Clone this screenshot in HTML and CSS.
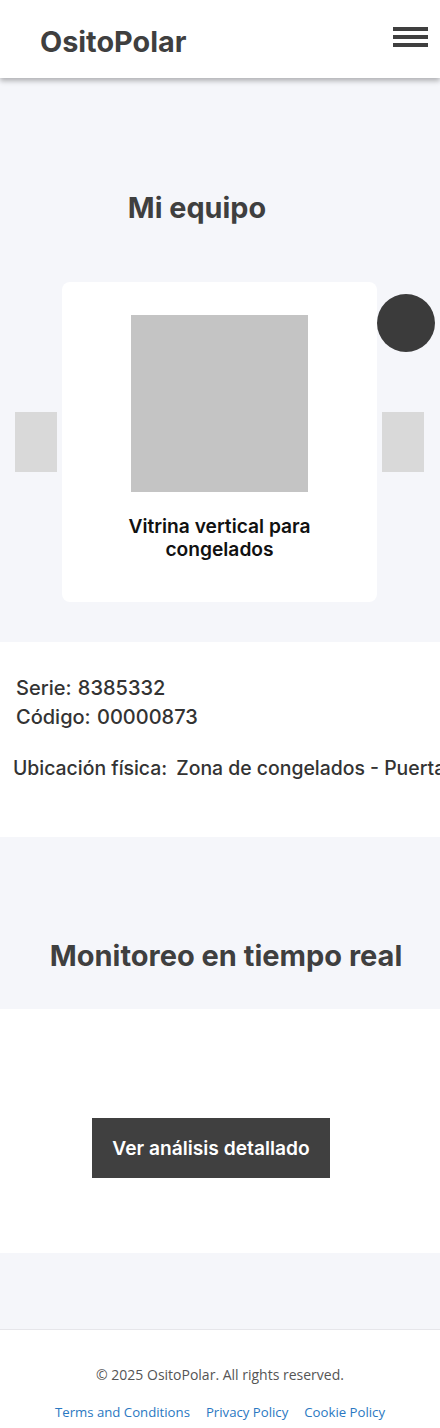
FILE: index.html
```html
<!DOCTYPE html>
<html lang="es">
<head>
<meta charset="utf-8">
<title>OsitoPolar</title>
<link rel="stylesheet" href="styles.css">
</head>
<body>
<header class="topbar">
  <div class="logo">OsitoPolar</div>
  <button class="menu" aria-label="Menú">
    <span></span><span></span><span></span>
  </button>
</header>

<section class="equipo">
  <h1 class="section-title equipo-title">Mi equipo</h1>
  <div class="carousel">
    <div class="nav-stub"></div>
    <div class="card">
      <div class="card-img"></div>
      <h2 class="card-title">Vitrina vertical para congelados</h2>
    </div>
    <div class="nav-stub"></div>
    <div class="dot"></div>
  </div>
</section>

<section class="info">
  <p class="info-line"><span class="lbl">Serie:</span> 8385332</p>
  <p class="info-line"><span class="lbl">Código:</span> 00000873</p>
  <p class="info-line loc"><span class="lbl">Ubicación física:</span> Zona de congelados - Puerta 2</p>
</section>

<section class="monitor">
  <h1 class="section-title monitor-title">Monitoreo en tiempo real</h1>
</section>

<section class="actions">
  <button class="btn">Ver análisis detallado</button>
</section>

<section class="spacer"></section>

<footer class="footer">
  <p class="copy">© 2025 OsitoPolar. All rights reserved.</p>
  <nav class="links">
    <a href="#">Terms and Conditions</a>
    <a href="#">Privacy Policy</a>
    <a href="#">Cookie Policy</a>
  </nav>
</footer>
</body>
</html>
```

FILE: styles.css
```css
* { box-sizing: border-box; }

body {
  margin: 0;
  font-family: Inter, "Liberation Sans", sans-serif;
  color: #404040;
  background: #ffffff;
  overflow-x: hidden;
}

.topbar {
  position: relative;
  z-index: 2;
  height: 78px;
  background: #ffffff;
  display: flex;
  align-items: center;
  justify-content: space-between;
  padding: 0 12px 0 40px;
  box-shadow: 0 3px 5px rgba(0, 0, 0, 0.28);
}

.logo {
  font-size: 28.8px;
  font-weight: 700;
  color: #3f3f3f;
  margin-top: 4px;
}

.menu {
  width: 35px;
  height: 20px;
  padding: 0;
  border: 0;
  background: transparent;
  display: flex;
  flex-direction: column;
  justify-content: space-between;
  margin-top: -4px;
}

.menu span {
  display: block;
  height: 4px;
  background: #3f3f3f;
}

.section-title {
  margin: 0;
  font-weight: 700;
  color: #3f3f3f;
  text-align: center;
  line-height: 1.2;
}

.equipo {
  background: #f5f6fa;
  padding: 113px 0 40px;
}

.equipo-title {
  font-size: 28.8px;
  padding-right: 46px;
}

.carousel {
  position: relative;
  margin-top: 56px;
  display: flex;
  align-items: center;
  gap: 5px;
  padding-left: 15px;
}

.nav-stub {
  width: 42px;
  height: 60px;
  background: #d9d9d9;
  flex: none;
}

.card {
  width: 315px;
  height: 320px;
  flex: none;
  background: #ffffff;
  border-radius: 8px;
  padding-top: 33px;
  display: flex;
  flex-direction: column;
  align-items: center;
}

.card-img {
  width: 177px;
  height: 177px;
  background: #c4c4c4;
}

.card-title {
  margin: 23px 0 0;
  font-size: 19.2px;
  line-height: 23px;
  font-weight: 600;
  color: #111111;
  text-align: center;
  width: 220px;
}

.dot {
  position: absolute;
  left: 377px;
  top: 12px;
  width: 58px;
  height: 58px;
  border-radius: 50%;
  background: #3b3b3b;
}

.info {
  background: #ffffff;
  padding: 32px 0 54px;
  overflow: hidden;
}

.info-line {
  margin: 0;
  padding-left: 16px;
  font-size: 20px;
  line-height: 29px;
  font-weight: 500;
  color: #333333;
  white-space: nowrap;
}

.info-line .lbl {
  margin-right: 1px;
}

.info-line.loc {
  margin-top: 22px;
  padding-left: 13px;
  font-size: 19.4px;
}

.info-line.loc .lbl {
  margin-right: 4px;
}

.monitor {
  background: #f5f6fa;
  padding: 102px 0 36px;
}

.monitor-title {
  font-size: 29px;
  padding-left: 12px;
}

.actions {
  background: #ffffff;
  padding: 109px 0 75px 92px;
}

.btn {
  display: block;
  width: 238px;
  height: 60px;
  border: 0;
  background: #404040;
  color: #ffffff;
  font-family: Inter, "Liberation Sans", sans-serif;
  font-size: 19.2px;
  font-weight: 600;
  padding: 0;
}

.spacer {
  height: 77px;
  background: #f5f6fa;
  border-bottom: 1px solid #e6e6ea;
}

.footer {
  background: #ffffff;
  padding-top: 34px;
  text-align: center;
  font-family: "Open Sans", "Noto Sans", sans-serif;
}

.copy {
  margin: 0;
  color: #555555;
  font-size: 14px;
  line-height: 22px;
}

.links {
  margin-top: 15px;
  display: flex;
  justify-content: center;
  gap: 16px;
  font-size: 13.2px;
  line-height: 22px;
}

.links a {
  color: #2a78c2;
  text-decoration: none;
}
```
